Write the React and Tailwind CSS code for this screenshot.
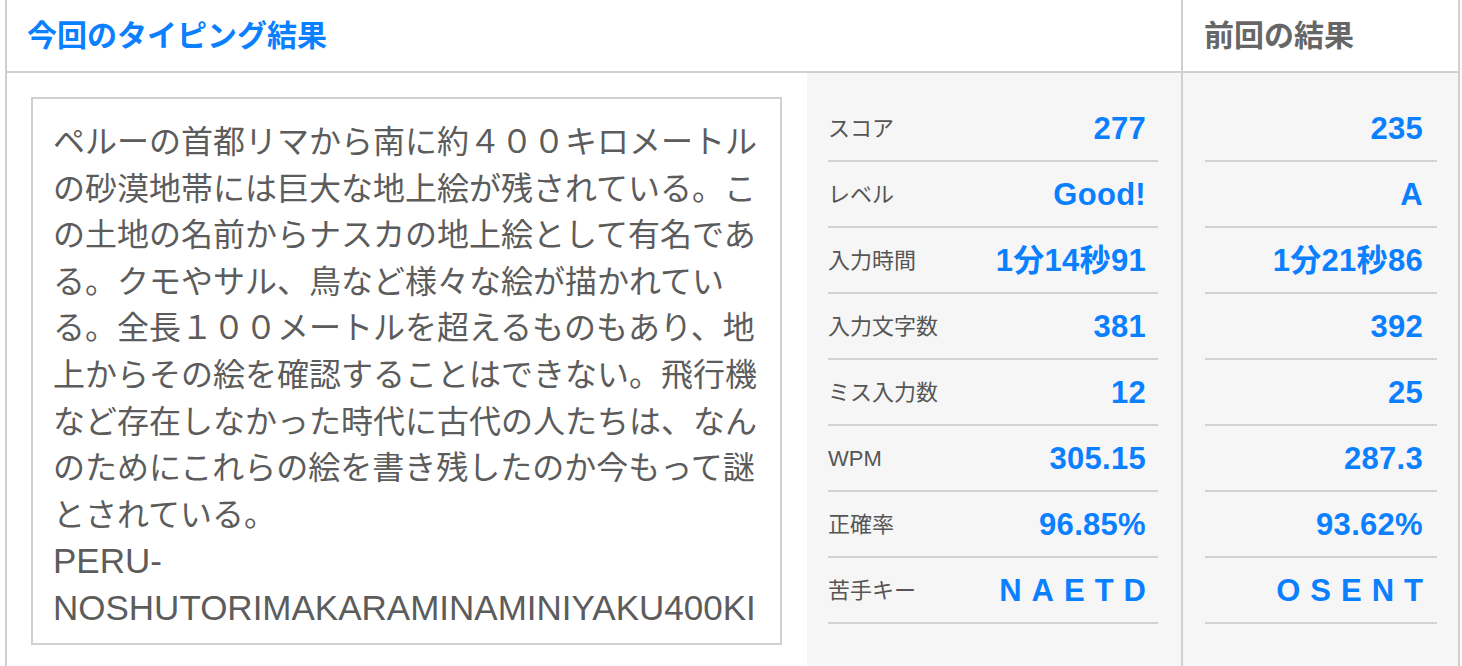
import React from "react";

const lines = [
  "ペルーの首都リマから南に約４００キロメートル",
  "の砂漠地帯には巨大な地上絵が残されている。こ",
  "の土地の名前からナスカの地上絵として有名であ",
  "る。クモやサル、鳥など様々な絵が描かれてい",
  "る。全長１００メートルを超えるものもあり、地",
  "上からその絵を確認することはできない。飛行機",
  "など存在しなかった時代に古代の人たちは、なん",
  "のためにこれらの絵を書き残したのか今もって謎",
  "とされている。",
];

const labels = ["スコア", "レベル", "入力時間", "入力文字数", "ミス入力数", "WPM", "正確率", "苦手キー"];
const current = ["277", "Good!", "1分14秒91", "381", "12", "305.15", "96.85%", "NAETD"];
const previous = ["235", "A", "1分21秒86", "392", "25", "287.3", "93.62%", "OSENT"];

function Value({ v, last }) {
  if (last) {
    return (
      <span className="mt-[3px] text-[31px] font-bold text-[#0a80ff] tracking-[10px] -mr-[10px]">{v}</span>
    );
  }
  return <span className="mt-[3px] text-[31px] font-bold text-[#0a80ff] tracking-[0.3px]">{v}</span>;
}

export default function App() {
  return (
    <div
      className="w-[1462px] h-[666px] overflow-hidden bg-white"
      style={{ fontFamily: '"Liberation Sans", "Noto Sans CJK JP", sans-serif' }}
    >
      <div className="ml-[5px] w-[1455px] border-l-2 border-r-2 border-[#d0d0d0]">
        <div className="flex h-[73px] border-b-2 border-[#d0d0d0]">
          <div className="w-[1176px] border-r-2 border-[#d0d0d0] flex items-center pl-[20px]">
            <span className="text-[30px] font-bold text-[#0a80ff]">今回のタイピング結果</span>
          </div>
          <div className="flex-1 flex items-center pl-[21px]">
            <span className="text-[30px] font-bold text-[#666666]">前回の結果</span>
          </div>
        </div>
        <div className="flex h-[600px]">
          <div className="w-[800px] bg-white pl-[24px] pt-[24px]">
            <div className="w-[751px] h-[548px] border-2 border-[#d0d0d0] overflow-hidden pt-[20px] pl-[20px] text-[32px] leading-[46.6px] text-[#5c5c5c]">
              {lines.map((l, i) => (
                <div key={i} className="whitespace-nowrap">
                  {l}
                </div>
              ))}
              <div className="whitespace-nowrap text-[35px] leading-[46.6px]">PERU-</div>
              <div className="whitespace-nowrap text-[35px] leading-[46.6px]">NOSHUTORIMAKARAMINAMINIYAKU400KI</div>
            </div>
          </div>
          <div className="w-[376px] bg-[#f6f6f6] border-r-2 border-[#d0d0d0] pt-[23px] pl-[21px] pr-[23px]">
            {labels.map((lab, i) => (
              <div
                key={i}
                className="h-[66px] border-b-2 border-[#d2d2d2] flex items-center justify-between pr-[12px]"
              >
                <span className="text-[22px] text-[#555555]">{lab}</span>
                <Value v={current[i]} last={i === 7} />
              </div>
            ))}
          </div>
          <div className="flex-1 bg-[#f6f6f6] pt-[23px] pl-[22px] pr-[21px]">
            {previous.map((v, i) => (
              <div
                key={i}
                className="h-[66px] border-b-2 border-[#d2d2d2] flex items-center justify-end pr-[14px]"
              >
                <Value v={v} last={i === 7} />
              </div>
            ))}
          </div>
        </div>
      </div>
    </div>
  );
}
